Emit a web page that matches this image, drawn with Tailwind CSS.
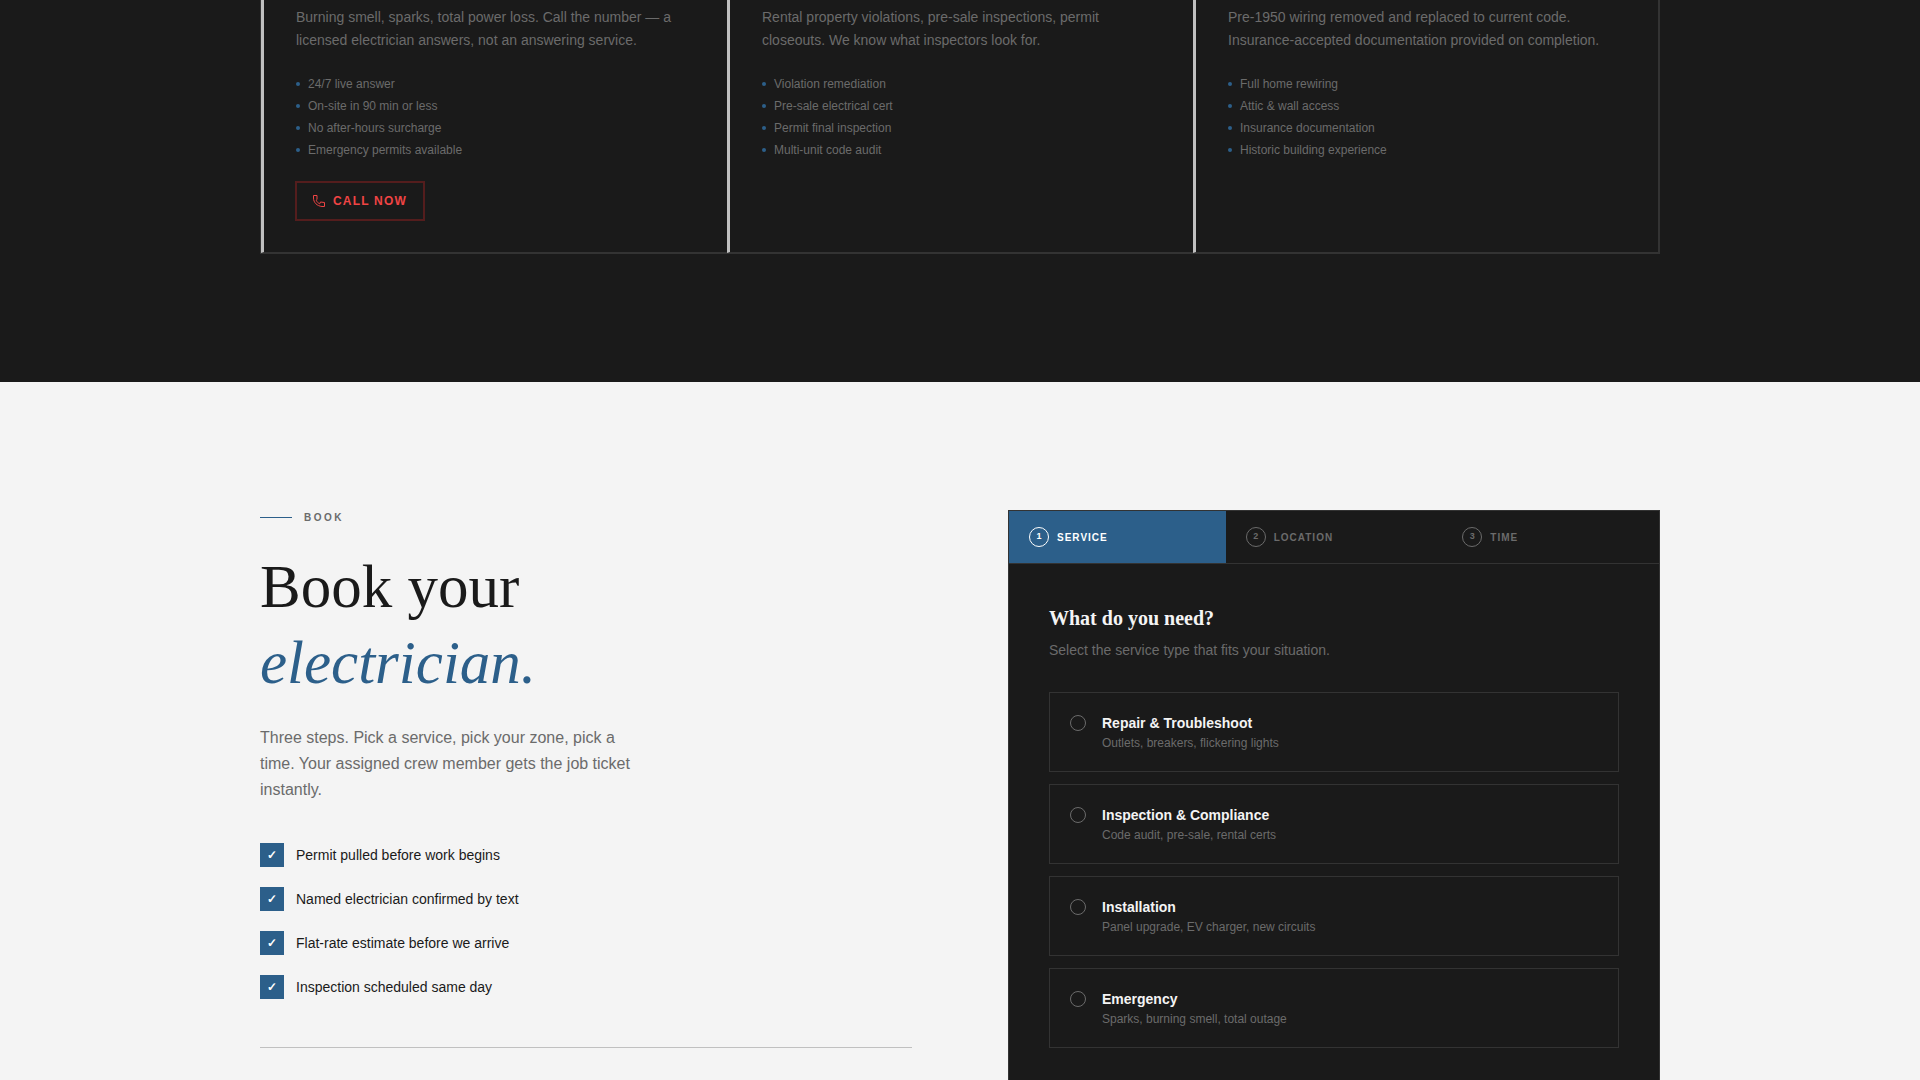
<!DOCTYPE html>
<html lang="en">

<head>
    <meta charset="UTF-8" />
    <meta name="viewport" content="width=device-width, initial-scale=1" />
    <title>Book your electrician</title>
    <script src="https://cdn.jsdelivr.net/npm/@tailwindcss/browser@4"></script>
</head>

<body class="flex min-h-screen flex-col bg-[#f4f4f4] font-['Liberation_Sans',Arial,sans-serif] text-[#1a1a1a]">
    <!-- Services -->
    <section class="bg-[#1a1a1a] px-10 pb-32 text-[#6b6b6b]">
        <div class="mx-auto grid max-w-[1400px] grid-cols-3 border border-t-0 border-[#333]">
            <article class="border-b border-l-3 border-b-[#333] border-l-[#c0c0c0] px-8 pt-[6px] pb-8">
                <p class="text-sm leading-[23px]">Burning smell, sparks, total power loss. Call the number — a licensed electrician answers, not an answering service.</p>
                <ul class="mt-6 space-y-[6px] text-xs leading-4">
                    <li class="flex items-center gap-2"><span class="size-1 rounded-full bg-[#2c5f8a]"></span>24/7 live answer</li>
                    <li class="flex items-center gap-2"><span class="size-1 rounded-full bg-[#2c5f8a]"></span>On-site in 90 min or less</li>
                    <li class="flex items-center gap-2"><span class="size-1 rounded-full bg-[#2c5f8a]"></span>No after-hours surcharge</li>
                    <li class="flex items-center gap-2"><span class="size-1 rounded-full bg-[#2c5f8a]"></span>Emergency permits available</li>
                </ul>
                <div class="mt-6 flex">
                    <a href="#book" class="flex h-[38px] items-center gap-2 border border-[#dc2626]/30 px-4 text-xs font-bold tracking-widest text-[#ef4444] ring-1 ring-[#dc2626]/30">
                        <svg class="size-3" viewBox="0 0 12 12" fill="none" stroke="currentColor" stroke-linejoin="round">
                            <path d="M.5.5H4v4L3.200 5.300C4 7 5 8 6.700 8.800L7.500 7L11.500 7.500V11.500H9C4 11 .5 7.500.5 3z" />
                        </svg>
                        CALL NOW
                    </a>
                </div>
            </article>
            <article class="border-b border-l-3 border-b-[#333] border-l-[#c0c0c0] px-8 pt-[6px] pb-8">
                <p class="text-sm leading-[23px]">Rental property violations, pre-sale inspections, permit closeouts. We know what inspectors look for.</p>
                <ul class="mt-6 space-y-[6px] text-xs leading-4">
                    <li class="flex items-center gap-2"><span class="size-1 rounded-full bg-[#2c5f8a]"></span>Violation remediation</li>
                    <li class="flex items-center gap-2"><span class="size-1 rounded-full bg-[#2c5f8a]"></span>Pre-sale electrical cert</li>
                    <li class="flex items-center gap-2"><span class="size-1 rounded-full bg-[#2c5f8a]"></span>Permit final inspection</li>
                    <li class="flex items-center gap-2"><span class="size-1 rounded-full bg-[#2c5f8a]"></span>Multi-unit code audit</li>
                </ul>
            </article>
            <article class="border-r border-b border-l-3 border-r-[#333] border-b-[#333] border-l-[#c0c0c0] px-8 pt-[6px] pb-8">
                <p class="text-sm leading-[23px]">Pre-1950 wiring removed and replaced to current code. Insurance-accepted documentation provided on completion.</p>
                <ul class="mt-6 space-y-[6px] text-xs leading-4">
                    <li class="flex items-center gap-2"><span class="size-1 rounded-full bg-[#2c5f8a]"></span>Full home rewiring</li>
                    <li class="flex items-center gap-2"><span class="size-1 rounded-full bg-[#2c5f8a]"></span>Attic &amp; wall access</li>
                    <li class="flex items-center gap-2"><span class="size-1 rounded-full bg-[#2c5f8a]"></span>Insurance documentation</li>
                    <li class="flex items-center gap-2"><span class="size-1 rounded-full bg-[#2c5f8a]"></span>Historic building experience</li>
                </ul>
            </article>
        </div>
    </section>

    <!-- Booking -->
    <section id="book" class="flex flex-1 flex-col px-10 pt-32">
        <div class="mx-auto grid w-full max-w-[1400px] flex-1 grid-cols-2 gap-24">
            <div>
                <div class="flex items-center gap-3 text-[10px] leading-[15px] font-bold tracking-[0.25em] text-[#6b6b6b]">
                    <span class="h-px w-8 bg-[#2c5f8a]"></span>BOOK
                </div>
                <h2 class="mt-6 font-['Liberation_Serif','Times_New_Roman',serif] text-[61px] leading-[76px]">
                    Book your<br><em class="text-[#2c5f8a]">electrician.</em>
                </h2>
                <p class="mt-6 max-w-[380px] leading-[26px] text-[#6b6b6b]">Three steps. Pick a service, pick your zone, pick a time. Your assigned crew member gets the job ticket instantly.</p>
                <ul class="mt-10 space-y-5 border-b border-[#c0c0c0] pb-12 text-sm leading-6">
                    <li class="flex items-center gap-3"><span class="grid size-6 place-items-center bg-[#2c5f8a] text-xs font-bold text-white">✓</span>Permit pulled before work begins</li>
                    <li class="flex items-center gap-3"><span class="grid size-6 place-items-center bg-[#2c5f8a] text-xs font-bold text-white">✓</span>Named electrician confirmed by text</li>
                    <li class="flex items-center gap-3"><span class="grid size-6 place-items-center bg-[#2c5f8a] text-xs font-bold text-white">✓</span>Flat-rate estimate before we arrive</li>
                    <li class="flex items-center gap-3"><span class="grid size-6 place-items-center bg-[#2c5f8a] text-xs font-bold text-white">✓</span>Inspection scheduled same day</li>
                </ul>
            </div>

            <form class="border border-b-0 border-[#333] bg-[#1a1a1a] text-[#6b6b6b]">
                <div class="grid grid-cols-3 border-b border-[#333] text-[10px] font-bold tracking-widest">
                    <button type="button" class="flex items-center gap-2 bg-[#2c5f8a] px-5 py-4 text-white">
                        <span class="grid size-5 place-items-center rounded-full border border-current text-[9px] tracking-normal">1</span>SERVICE
                    </button>
                    <button type="button" class="flex items-center gap-2 px-5 py-4">
                        <span class="grid size-5 place-items-center rounded-full border border-current text-[9px] tracking-normal">2</span>LOCATION
                    </button>
                    <button type="button" class="flex items-center gap-2 px-5 py-4">
                        <span class="grid size-5 place-items-center rounded-full border border-current text-[9px] tracking-normal">3</span>TIME
                    </button>
                </div>
                <div class="px-10 pt-10 pb-8">
                    <h3 id="service-title" class="font-['Liberation_Serif','Times_New_Roman',serif] text-xl leading-7 font-bold text-[#f4f4f4]">What do you need?</h3>
                    <p class="mt-2 text-sm leading-5">Select the service type that fits your situation.</p>
                    <fieldset class="mt-8 space-y-3" aria-labelledby="service-title">
                        <label class="flex items-start gap-4 border border-[#333] p-5">
                            <input type="radio" name="service" class="mt-[2px] size-4 appearance-none rounded-full border border-[#6b6b6b]" />
                            <span><strong class="block text-sm leading-5 text-[#f4f4f4]">Repair &amp; Troubleshoot</strong><span class="mt-[2px] block text-xs leading-4">Outlets, breakers, flickering lights</span></span>
                        </label>
                        <label class="flex items-start gap-4 border border-[#333] p-5">
                            <input type="radio" name="service" class="mt-[2px] size-4 appearance-none rounded-full border border-[#6b6b6b]" />
                            <span><strong class="block text-sm leading-5 text-[#f4f4f4]">Inspection &amp; Compliance</strong><span class="mt-[2px] block text-xs leading-4">Code audit, pre-sale, rental certs</span></span>
                        </label>
                        <label class="flex items-start gap-4 border border-[#333] p-5">
                            <input type="radio" name="service" class="mt-[2px] size-4 appearance-none rounded-full border border-[#6b6b6b]" />
                            <span><strong class="block text-sm leading-5 text-[#f4f4f4]">Installation</strong><span class="mt-[2px] block text-xs leading-4">Panel upgrade, EV charger, new circuits</span></span>
                        </label>
                        <label class="flex items-start gap-4 border border-[#333] p-5">
                            <input type="radio" name="service" class="mt-[2px] size-4 appearance-none rounded-full border border-[#6b6b6b]" />
                            <span><strong class="block text-sm leading-5 text-[#f4f4f4]">Emergency</strong><span class="mt-[2px] block text-xs leading-4">Sparks, burning smell, total outage</span></span>
                        </label>
                    </fieldset>
                </div>
            </form>
        </div>
    </section>
</body>

</html>
